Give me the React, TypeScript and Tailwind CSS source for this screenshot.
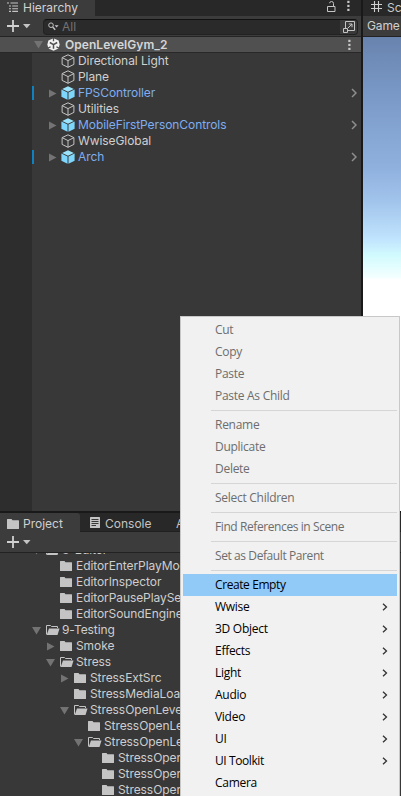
import type { ReactNode } from "react";

function Cube({ prefab }: { prefab?: boolean }) {
  return prefab ? (
    <svg width="14" height="14" viewBox="0 0 14 14" className="shrink-0">
      <path d="M7 0.2 12.8 2.9 7 5.8 1.2 2.9Z" fill="#9be2fb" />
      <path d="M0.4 3.5 6.5 6.6V13.8L0.4 10.8Z" fill="#7fd6fd" />
      <path d="M13.6 3.5 7.5 6.6V13.8L13.6 10.8Z" fill="#7fd6fd" />
    </svg>
  ) : (
    <svg width="14" height="14" viewBox="0 0 14 14" className="shrink-0" fill="none" stroke="#c4c4c4" strokeWidth="1">
      <path d="M7 0.8 12.9 3.6V10.4L7 13.3 1.1 10.4V3.6ZM1.1 3.6 7 6.6 12.9 3.6M7 6.6V13.3" />
    </svg>
  );
}

function UnityLogo() {
  return (
    <svg width="13" height="13" viewBox="0 0 13 13" className="ml-1 shrink-0">
      <path d="M6.5 0.2 11.6 2.4 12.6 6.5 11.6 10.6 6.5 12.8 1.4 10.6 0.4 6.5 1.4 2.4Z" fill="#f3f3f3" />
      <path d="M6.5 6.6V10.8M6.5 6.6 2.8 4.5M6.5 6.6 10.2 4.5" stroke="#505050" strokeWidth="1.5" />
      <path d="M6.5 0V3.2M0.6 10.4 3.6 8.7M12.4 10.4 9.4 8.7" stroke="#505050" strokeWidth="1.3" />
    </svg>
  );
}

function Arrow({ open }: { open?: boolean }) {
  return (
    <svg width="9" height="9" viewBox="0 0 9 9" className="shrink-0" fill="#737373">
      {open ? <path d="M0 1H9L4.5 8.5Z" /> : <path d="M1 0.5V8.5L8.5 4.5Z" />}
    </svg>
  );
}

function Folder({ open }: { open?: boolean }) {
  return open ? (
    <svg width="14" height="12" viewBox="0 0 14 12" className="shrink-0">
      <path d="M0.5 10.5V1.5H4.5L5.5 2.5H11.5V4" fill="none" stroke="#c4c4c4" />
      <path d="M3 4.5H13.5L11.5 11H0.7Z" fill="#c4c4c4" />
    </svg>
  ) : (
    <svg width="14" height="12" viewBox="0 0 14 12" className="shrink-0">
      <path d="M0 1.5Q0 1 0.5 1H4.5L5.5 2.2H11.5Q12 2.2 12 2.7V10.5Q12 11 11.5 11H0.5Q0 11 0 10.5Z" fill="#c4c4c4" />
    </svg>
  );
}

function Dots() {
  return (
    <svg width="3" height="12" viewBox="0 0 3 12" className="shrink-0" fill="#c8c8c8">
      <rect x="0.3" y="0.8" width="2.2" height="2.2" />
      <rect x="0.3" y="4.8" width="2.2" height="2.2" />
      <rect x="0.3" y="8.8" width="2.2" height="2.2" />
    </svg>
  );
}

function AddButton() {
  return (
    <svg width="24" height="12" viewBox="0 0 24 12" className="ml-[7px] shrink-0">
      <path d="M0 6H12M6 0V12" stroke="#d0d0d0" strokeWidth="1.8" />
      <path d="M16 4H23.5L19.75 8.2Z" fill="#c4c4c4" />
    </svg>
  );
}

const objects = [
  { name: "Directional Light" },
  { name: "Plane" },
  { name: "FPSController", prefab: true, mark: true },
  { name: "Utilities" },
  { name: "MobileFirstPersonControls", prefab: true },
  { name: "WwiseGlobal" },
  { name: "Arch", prefab: true, mark: true },
];

function HierarchyRow({ name, prefab, mark }: { name: string; prefab?: boolean; mark?: boolean }) {
  return (
    <div className="flex h-4 items-center">
      <span className={`h-[14px] w-[2px] ${mark ? "bg-[#0f81be]" : ""}`} />
      <span className="ml-[14px] flex w-[13px]">{prefab && <Arrow />}</span>
      <Cube prefab={prefab} />
      <span className={`ml-[3px] tracking-[-0.08px] ${prefab ? "text-[#7faef0]" : "text-[#d0d0d0]"}`}>{name}</span>
      {prefab && (
        <svg width="6" height="10" viewBox="0 0 6 10" className="ml-auto mr-1" fill="none" stroke="#8f8f8f" strokeWidth="1.5">
          <path d="M1 1 5 5 1 9" />
        </svg>
      )}
    </div>
  );
}

function Hierarchy() {
  return (
    <section className="flex w-[361px] shrink-0 flex-col bg-[#383838]">
      <div className="flex h-4 items-center bg-[#282828]">
        <div className="flex h-4 w-[95px] items-center bg-[#3c3c3c] pl-[7px]">
          <svg width="12" height="10" viewBox="0 0 12 10" className="mb-[2px]" stroke="#c4c4c4" strokeWidth="1.1">
            <path d="M0 1H2M3.5 1H11M2 4H4M5.2 4H11M2 6.7H4M5.2 6.7H11M2 9.4H4M5.2 9.4H11" />
          </svg>
          <span className="ml-1 text-[#d2d2d2]">Hierarchy</span>
        </div>
        <svg width="9" height="11" viewBox="0 0 9 11" className="mb-[3px] ml-auto mr-[11px]" fill="none" stroke="#c4c4c4">
          <path d="M0.5 5.5H8V10.5H0.5ZM6.5 5.5V2.5Q6.5 0.5 4.5 0.5 2.7 0.5 2.6 2.2" />
        </svg>
        <div className="mb-1 mr-[11px]"><Dots /></div>
      </div>
      <div className="flex h-5 items-center bg-[#3c3c3c]">
        <AddButton />
        <div className="ml-3 mt-px flex h-4 w-[315px] items-center overflow-hidden rounded-[4px] border border-[#222] border-t-[#111] bg-[#2a2a2a]">
          <svg width="11" height="9" viewBox="0 0 11 9" className="ml-1" fill="none" stroke="#c4c4c4">
            <circle cx="3" cy="3.2" r="2.3" />
            <path d="M4.7 5 7.2 7.8" strokeWidth="1.4" />
            <path d="M6.6 3.3H10.6L8.6 5.6Z" fill="#c4c4c4" stroke="none" />
          </svg>
          <span className="ml-[3px] text-[#727272]">All</span>
          <div className="ml-auto flex h-full w-[17px] items-center justify-center bg-[#3a3a3a]">
            <svg width="12" height="12" viewBox="0 0 12 12" fill="none" stroke="#c4c4c4">
              <path d="M2.5 7V0.5H11.5V9.5H5M0.5 7.5H4.5V11.5H0.5ZM5 7 9 3M5.8 3H9V6.2" />
            </svg>
          </div>
        </div>
      </div>
      <div className="flex h-[17px] items-center border-b border-t border-b-[#282828] border-t-[#242424] bg-[#505050] pl-[34px]">
        <Arrow open />
        <UnityLogo />
        <span className="ml-[5px] font-semibold tracking-[0.05px] text-[#d6d6d6]">OpenLevelGym_2</span>
        <div className="ml-auto mr-[10px]"><Dots /></div>
      </div>
      <div className="flex h-[458px]">
        <div className="w-8 bg-[#2d2d2d]" />
        <div className="flex-1">
          {objects.map((o) => <HierarchyRow key={o.name} {...o} />)}
        </div>
      </div>
    </section>
  );
}

function GameView() {
  return (
    <section className="flex flex-1 flex-col overflow-hidden border-l-2 border-[#191919] bg-white">
      <div className="flex h-4 shrink-0 items-center bg-[#282828] pl-2">
        <svg width="11" height="11" viewBox="0 0 11 11" className="mb-[3px] shrink-0" stroke="#d0d0d0" strokeWidth="1.1">
          <path d="M3.5 0V11M7.5 0V11M0 3.5H11M0 7.5H11" />
        </svg>
        <span className="ml-[5px] text-[#c8c8c8]">Scene</span>
      </div>
      <div className="flex h-[21px] shrink-0 items-center whitespace-nowrap border-b border-[#232323] bg-[#3c3c3c] pl-1 tracking-[-0.15px] text-[#d0d0d0]">Game</div>
      <div className="h-[242px] shrink-0 bg-[linear-gradient(#6883ae_0px,#7896c3_50px,#8fb0dd_130px,#a0c3eb_163px,#c0e4fd_202px,#d2fbfe_219px,#f5ffff_241px,#ffffff_242px)]" />
    </section>
  );
}

const folders = [
  { name: "8-Editor", depth: 0, open: true, arrow: true },
  { name: "EditorEnterPlayMode", depth: 1 },
  { name: "EditorInspector", depth: 1 },
  { name: "EditorPausePlaySession", depth: 1 },
  { name: "EditorSoundEngine", depth: 1 },
  { name: "9-Testing", depth: 0, open: true, arrow: true },
  { name: "Smoke", depth: 1, arrow: true },
  { name: "Stress", depth: 1, open: true, arrow: true },
  { name: "StressExtSrc", depth: 2, arrow: true },
  { name: "StressMediaLoad", depth: 2 },
  { name: "StressOpenLevel", depth: 2, open: true, arrow: true },
  { name: "StressOpenLevel", depth: 3 },
  { name: "StressOpenLevel", depth: 3, open: true, arrow: true },
  { name: "StressOpenLevel", depth: 4 },
  { name: "StressOpenLevel", depth: 4 },
  { name: "StressOpenLevel", depth: 4 },
];

function Project() {
  return (
    <section className="flex flex-1 flex-col overflow-hidden border-t-2 border-[#191919] bg-[#383838]">
      <div className="flex h-[19px] shrink-0 bg-[#282828]">
        <div className="flex w-20 items-center rounded-tr-[3px] bg-[#3c3c3c] pl-[7px] pt-[3px]">
          <Folder />
          <span className="ml-[2px] text-[#d0d0d0]">Project</span>
        </div>
        <div className="flex flex-1 items-center border-b border-[#202020] pl-[10px] pt-[3px]">
          <svg width="10" height="11" viewBox="0 0 10 11" className="mb-[3px]">
            <rect width="10" height="11" rx="0.6" fill="#c4c4c4" />
            <path d="M1.5 2.5H8.5M1.5 4.5H8.5M1.5 6.5H8.5M1.5 8.5H6" stroke="#282828" strokeWidth="0.9" />
          </svg>
          <span className="ml-[5px] w-[71px] text-[#c4c4c4]">Console</span>
          <span className="text-[#c4c4c4]">A</span>
        </div>
      </div>
      <div className="flex h-[21px] shrink-0 items-center border-b border-[#222] bg-[#3c3c3c]"><AddButton /></div>
      <div className="flex-1 overflow-hidden">
        <div className="-mt-[11px]">
          {folders.map((f, i) => (
            <div key={i} className="flex h-4 items-center whitespace-nowrap text-[#cecece]">
              <span className="shrink-0" style={{ width: 32 + f.depth * 14 }} />
              <span className="flex w-[14px] shrink-0">{f.arrow && <Arrow open={f.open} />}</span>
              <Folder open={f.open} />
              <span className="ml-[2px] tracking-[-0.08px]">{f.name}</span>
            </div>
          ))}
        </div>
      </div>
    </section>
  );
}

function Item({ children, off, sub, active, tight }: { children: ReactNode; off?: boolean; sub?: boolean; active?: boolean; tight?: boolean }) {
  return (
    <div className={`mx-[2px] flex h-[22px] items-center pl-8 pr-[9px] ${active ? "bg-[#91c9f7]" : ""} ${off ? "text-[#6d6d6d]" : "text-black"}`}>
      <span className={tight ? "tracking-[-0.41px]" : "tracking-[-0.28px]"}>{children}</span>
      {sub && (
        <svg width="6" height="8" viewBox="0 0 6 8" className="ml-auto" fill="none" stroke="#333" strokeWidth="1.3">
          <path d="M1 0.7 4.5 4 1 7.3" />
        </svg>
      )}
    </div>
  );
}

function Separator() {
  return <div className="ml-[30px] mr-[2px] flex h-[7px] items-center"><div className="h-px flex-1 bg-[#d5d5d5]" /></div>;
}

function ContextMenu() {
  return (
    <div className="absolute left-[180px] top-[316px] h-[500px] w-[220px] border border-[#c8c8c8] bg-[#f1f1f1] pt-[2px] font-['Open_Sans','Noto_Sans',sans-serif] text-[12px]">
      <Item off>Cut</Item>
      <Item off>Copy</Item>
      <Item off>Paste</Item>
      <Item off>Paste As Child</Item>
      <Separator />
      <Item off>Rename</Item>
      <Item off>Duplicate</Item>
      <Item off>Delete</Item>
      <Separator />
      <Item off>Select Children</Item>
      <Separator />
      <Item off tight>Find References in Scene</Item>
      <Separator />
      <Item off tight>Set as Default Parent</Item>
      <Separator />
      <Item active tight>Create Empty</Item>
      <Item sub>Wwise</Item>
      <Item sub>3D Object</Item>
      <Item sub>Effects</Item>
      <Item sub>Light</Item>
      <Item sub>Audio</Item>
      <Item sub>Video</Item>
      <Item sub>UI</Item>
      <Item sub tight>UI Toolkit</Item>
      <Item>Camera</Item>
    </div>
  );
}

export default function App() {
  return (
    <main className="relative flex h-[796px] w-[401px] flex-col overflow-hidden bg-[#383838] font-[Inter,sans-serif] text-[12px] leading-4">
      <div className="flex h-[511px] shrink-0">
        <Hierarchy />
        <GameView />
      </div>
      <Project />
      <ContextMenu />
    </main>
  );
}
